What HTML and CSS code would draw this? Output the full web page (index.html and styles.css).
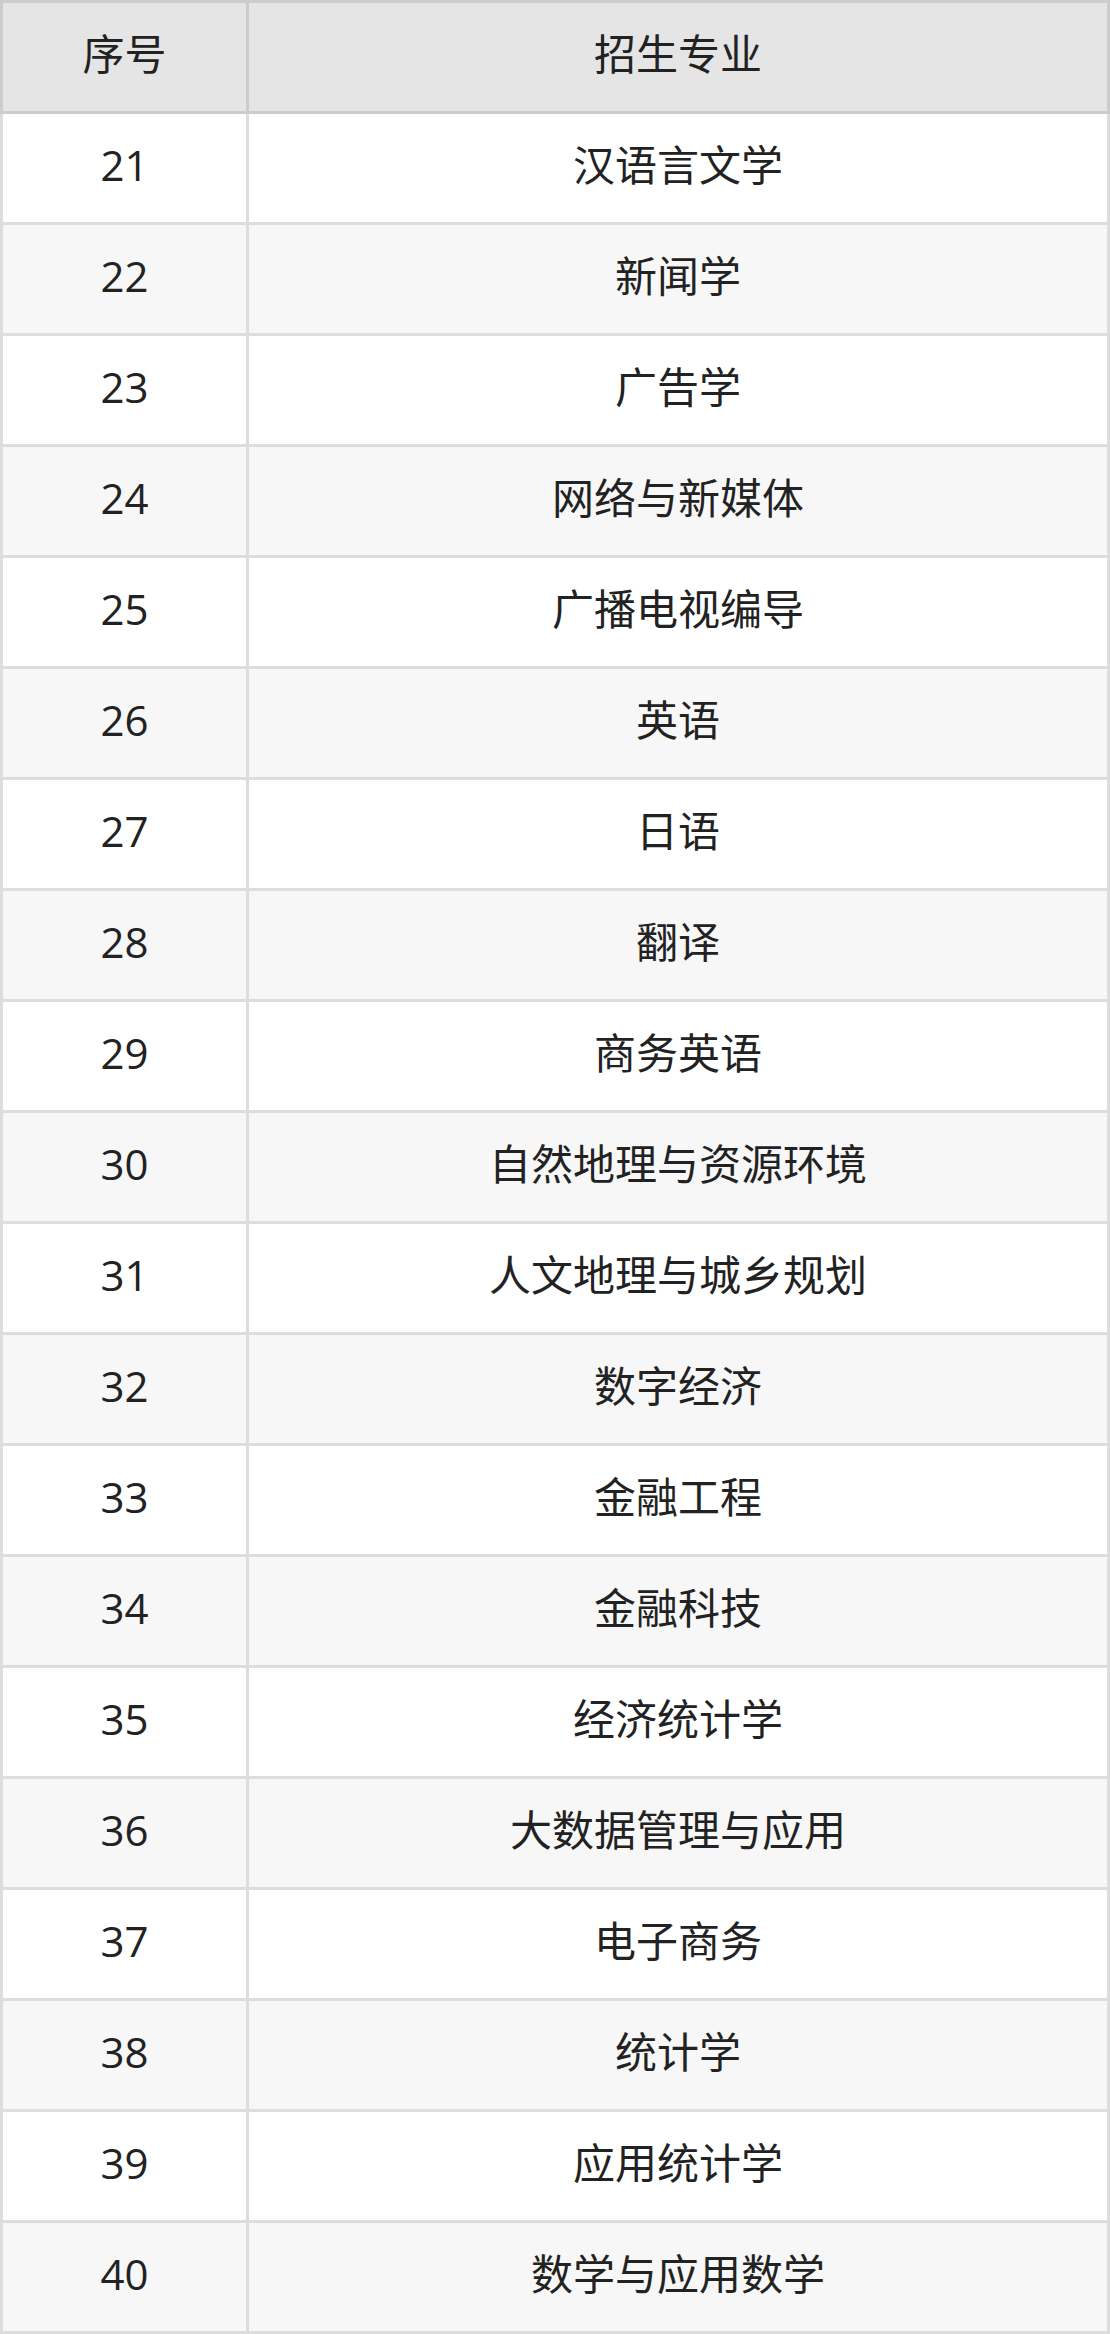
FILE: index.html
```html
<!DOCTYPE html>
<html lang="zh-CN">
<head>
<meta charset="utf-8">
<title>招生专业</title>
<link rel="stylesheet" href="styles.css">
</head>
<body>
<table class="majors">
  <colgroup><col class="col-no"><col class="col-name"></colgroup>
  <thead>
    <tr><th>序号</th><th>招生专业</th></tr>
  </thead>
  <tbody>
    <tr><td>21</td><td>汉语言文学</td></tr>
    <tr><td>22</td><td>新闻学</td></tr>
    <tr><td>23</td><td>广告学</td></tr>
    <tr><td>24</td><td>网络与新媒体</td></tr>
    <tr><td>25</td><td>广播电视编导</td></tr>
    <tr><td>26</td><td>英语</td></tr>
    <tr><td>27</td><td>日语</td></tr>
    <tr><td>28</td><td>翻译</td></tr>
    <tr><td>29</td><td>商务英语</td></tr>
    <tr><td>30</td><td>自然地理与资源环境</td></tr>
    <tr><td>31</td><td>人文地理与城乡规划</td></tr>
    <tr><td>32</td><td>数字经济</td></tr>
    <tr><td>33</td><td>金融工程</td></tr>
    <tr><td>34</td><td>金融科技</td></tr>
    <tr><td>35</td><td>经济统计学</td></tr>
    <tr><td>36</td><td>大数据管理与应用</td></tr>
    <tr><td>37</td><td>电子商务</td></tr>
    <tr><td>38</td><td>统计学</td></tr>
    <tr><td>39</td><td>应用统计学</td></tr>
    <tr><td>40</td><td>数学与应用数学</td></tr>
  </tbody>
</table>
</body>
</html>
```
FILE: styles.css
```css
html, body {
  margin: 0;
  padding: 0;
  background: #ffffff;
}
.majors {
  width: 1110px;
  border-collapse: collapse;
  table-layout: fixed;
  font-family: "Open Sans", "Noto Sans CJK SC", sans-serif;
  font-size: 42px;
  color: #222222;
}
.col-no { width: 246px; }
.majors th, .majors td {
  height: 102px;
  padding: 0 0 6px;
  text-align: center;
  vertical-align: middle;
  font-weight: normal;
  line-height: 1.2;
}
.majors th {
  background: #e5e5e5;
  border: 3px solid #cccccc;
}
.majors td {
  border: 3px solid #dddddd;
}
.majors tbody tr:nth-child(odd) td { background: #ffffff; }
.majors tbody tr:nth-child(even) td { background: #f7f7f7; }
```
